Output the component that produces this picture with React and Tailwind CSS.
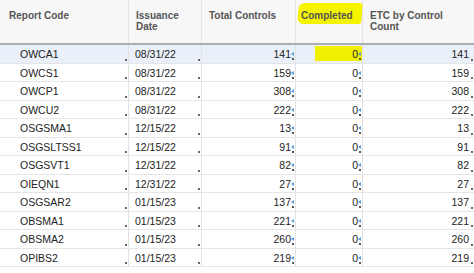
const rows = [
  ['OWCA1', '08/31/22', 141, 0, 141],
  ['OWCS1', '08/31/22', 159, 0, 159],
  ['OWCP1', '08/31/22', 308, 0, 308],
  ['OWCU2', '08/31/22', 222, 0, 222],
  ['OSGSMA1', '12/15/22', 13, 0, 13],
  ['OSGSLTSS1', '12/15/22', 91, 0, 91],
  ['OSGSVT1', '12/31/22', 82, 0, 82],
  ['OIEQN1', '12/31/22', 27, 0, 27],
  ['OSGSAR2', '01/15/23', 137, 0, 137],
  ['OBSMA1', '01/15/23', 221, 0, 221],
  ['OBSMA2', '01/15/23', 260, 0, 260],
  ['OPIBS2', '01/15/23', 219, 0, 219],
];

// tiny grey drag handle in the bottom-right corner of a cell
const Dot = () => <span className="absolute right-[1px] bottom-[2px] w-[2px] h-[2px] bg-[#666]" />;

// blue sort/edit marker used by the numeric columns
const Marker = () => (
  <span className="absolute right-[1px] top-[7px] flex flex-col items-center">
    <svg width="3" height="4" viewBox="0 0 3 4">
      <path d="M3 0 L0 2 L3 4 Z" fill="#5b9bd5" />
    </svg>
    <span className="mt-[2px] w-[2px] h-[2px] bg-[#555]" />
  </span>
);

export default function App() {
  return (
    <div className="w-[474px] h-[273px] overflow-hidden bg-white text-[#222]" style={{ fontFamily: '"Liberation Sans", Arial, sans-serif' }}>
      <div className="flex h-[45px] bg-[#f7f7f7] border-b-2 border-[#a8adb4] text-[10px] font-bold text-[#555] leading-[11px]">
        <div className="w-[129px] border-r border-[#e2e2e2] pl-[9px] pt-[10px]">Report Code</div>
        <div className="w-[73px] border-r border-[#e2e2e2] pl-[7px] pt-[10px]">Issuance<br />Date</div>
        <div className="w-[94px] border-r border-[#e2e2e2] pl-[7px] pt-[10px]">Total Controls</div>
        <div className="relative w-[67px] border-r border-[#e2e2e2] pl-[5px] pt-[10px]">
          <span className="absolute left-[2px] top-[3px] w-[64px] h-[21px] bg-[#f4f400] rounded-l-[6px] rounded-r-[3px] skew-x-[-4deg]" />
          <span className="relative">Completed</span>
        </div>
        <div className="flex-1 pl-[7px] pt-[10px]">ETC by Control<br />Count</div>
      </div>
      {rows.map((r, i) => (
        <div key={r[0]} className={`flex h-[18.5px] border-b border-[#e6e6e6] text-[10.5px] leading-[18px] ${i === 0 ? 'bg-[#e9f0f9]' : 'bg-white'}`}>
          <div className="relative w-[129px] border-r border-[#e2e2e2] pl-[20px]">
            {r[0]}
            <Dot />
          </div>
          <div className="relative w-[73px] border-r border-[#e2e2e2] pl-[6px]">
            {r[1]}
            <Dot />
          </div>
          <div className="relative w-[94px] border-r border-[#e2e2e2] pr-[4px] text-right">
            {r[2]}
            <Marker />
          </div>
          <div className="relative w-[67px] border-r border-[#e2e2e2] pr-[4px] text-right">
            {i === 0 && <span className="absolute right-0 top-[1px] w-[47px] h-[15px] bg-[#f0f000]" />}
            <span className="relative">{r[3]}</span>
            <Marker />
          </div>
          <div className="relative flex-1 pr-[5px] text-right">
            {r[4]}
            <Dot />
          </div>
        </div>
      ))}
    </div>
  );
}
